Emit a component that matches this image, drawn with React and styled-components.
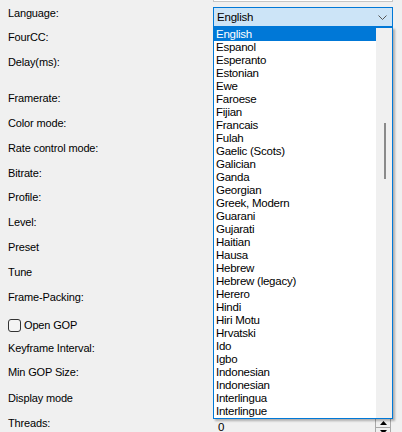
import React from "react";
import styled, { createGlobalStyle } from "styled-components";

const GlobalStyle = createGlobalStyle`
  html, body {
    margin: 0;
    padding: 0;
    background: #f0f0f0;
    overflow: hidden;
  }
  body {
    font-family: "Liberation Sans", Arial, sans-serif;
    font-size: 11px;
    color: #000;
  }
`;

const Page = styled.div`
  display: flex;
  flex-direction: column;
  margin-top: -25px;
  padding-left: 8px;
  width: 394px;
  height: 457px;
  overflow: hidden;
`;

const Row = styled.div`
  display: flex;
  align-items: flex-start;
  height: ${(p) => p.$h || 25}px;
  flex: none;
`;

const Label = styled.div`
  width: 205px;
  flex: none;
  padding-top: 1px;
  line-height: 25px;
  letter-spacing: -0.15px;
  white-space: nowrap;
`;

const TextBox = styled.div`
  margin-top: 6px;
  width: 180px;
  height: 21px;
  box-sizing: border-box;
  background: #fff;
  border: 1px solid #c6c6c6;
`;

const ComboWrap = styled.div`
  position: relative;
  margin-top: 7px;
  width: 180px;
`;

const Combo = styled.div`
  display: flex;
  align-items: center;
  justify-content: space-between;
  box-sizing: border-box;
  height: 20px;
  padding: 0 5px 0 3px;
  background: #cce4f7;
  border: 1px solid #0078d7;
  font-size: 11.5px;
  letter-spacing: -0.2px;
`;

const DropList = styled.div`
  position: absolute;
  top: 100%;
  left: 0;
  width: 180px;
  height: 392px;
  box-sizing: border-box;
  display: flex;
  background: #fff;
  border: 1px solid #0078d7;
  box-shadow: 2px 2px 2px rgba(0, 0, 0, 0.28);
  z-index: 5;
`;

const Items = styled.div`
  width: 162px;
  display: flex;
  flex-direction: column;
  overflow: hidden;
`;

const Item = styled.div`
  height: 13px;
  line-height: 13px;
  padding-left: 2px;
  font-size: 11.5px;
  letter-spacing: -0.25px;
  white-space: nowrap;
  background: ${(p) => (p.$selected ? "#0078d7" : "transparent")};
  color: ${(p) => (p.$selected ? "#fff" : "#000")};
`;

const ScrollBar = styled.div`
  width: 16px;
  background: #f0f0f0;
  display: flex;
  flex-direction: column;
  align-items: center;
  padding-top: 95px;
  box-sizing: border-box;
`;

const Thumb = styled.div`
  width: 2px;
  height: 56px;
  background: #8a8a8a;
  margin-left: 1px;
`;

const CheckRow = styled.label`
  display: flex;
  align-items: center;
  gap: 3px;
  line-height: 25px;
  padding-top: 1px;
  letter-spacing: -0.15px;
`;

const CheckBox = styled.span`
  width: 13px;
  height: 13px;
  box-sizing: border-box;
  border: 1px solid #333;
  border-radius: 3px;
  background: #f4f4f4;
`;

const SpinField = styled.div`
  margin-top: 8px;
  width: 180px;
  height: 20px;
  box-sizing: border-box;
  display: flex;
  align-items: flex-start;
  justify-content: space-between;
  padding-left: 5px;
  font-size: 11.5px;
`;

const SpinText = styled.span`
  line-height: 18px;
`;

const SpinButtons = styled.div`
  display: flex;
  flex-direction: column;
  width: 16px;
  margin-right: 2px;
`;

const SpinButton = styled.div`
  height: 8px;
  display: flex;
  align-items: center;
  justify-content: center;
  background: #f0f0f0;
  border: 1px solid #a8a8a8;
  border-top: ${(p) => (p.$first ? "1px solid #a8a8a8" : "none")};
`;

const languages = [
  "English",
  "Espanol",
  "Esperanto",
  "Estonian",
  "Ewe",
  "Faroese",
  "Fijian",
  "Francais",
  "Fulah",
  "Gaelic (Scots)",
  "Galician",
  "Ganda",
  "Georgian",
  "Greek, Modern",
  "Guarani",
  "Gujarati",
  "Haitian",
  "Hausa",
  "Hebrew",
  "Hebrew (legacy)",
  "Herero",
  "Hindi",
  "Hiri Motu",
  "Hrvatski",
  "Ido",
  "Igbo",
  "Indonesian",
  "Indonesian",
  "Interlingua",
  "Interlingue",
];

const Chevron = () => (
  <svg width="9" height="5" viewBox="0 0 9 5">
    <polyline points="0.5,0.5 4.5,4.5 8.5,0.5" fill="none" stroke="#555" strokeWidth="1" />
  </svg>
);

const Arrow = ({ up }) => (
  <svg width="7" height="4" viewBox="0 0 7 4">
    <polygon points={up ? "3.5,0 7,4 0,4" : "0,0 7,0 3.5,4"} fill="#000" />
  </svg>
);

const rows = [
  ["FourCC:", 25],
  ["Delay(ms):", 36],
  ["Framerate:", 25],
  ["Color mode:", 25],
  ["Rate control mode:", 25],
  ["Bitrate:", 24],
  ["Profile:", 25],
  ["Level:", 25],
  ["Preset", 25],
  ["Tune", 25],
  ["Frame-Packing:", 28],
];

const lowerRows = [
  ["Keyframe Interval:", 24],
  ["Min GOP Size:", 26],
  ["Display mode", 25],
];

export default function App() {
  return (
    <>
      <GlobalStyle />
      <Page>
        <Row $h={25}>
          <Label />
          <TextBox />
        </Row>
        <Row $h={24}>
          <Label>Language:</Label>
          <ComboWrap>
            <Combo>
              <span>English</span>
              <Chevron />
            </Combo>
            <DropList>
              <Items>
                {languages.map((name, i) => (
                  <Item key={i} $selected={i === 0}>
                    {name}
                  </Item>
                ))}
              </Items>
              <ScrollBar>
                <Thumb />
              </ScrollBar>
            </DropList>
          </ComboWrap>
        </Row>
        {rows.map(([text, h]) => (
          <Row key={text} $h={h}>
            <Label>{text}</Label>
          </Row>
        ))}
        <Row $h={23}>
          <CheckRow>
            <CheckBox />
            Open GOP
          </CheckRow>
        </Row>
        {lowerRows.map(([text, h]) => (
          <Row key={text} $h={h}>
            <Label>{text}</Label>
          </Row>
        ))}
        <Row $h={25}>
          <Label>Threads:</Label>
          <SpinField>
            <SpinText>0</SpinText>
            <SpinButtons>
              <SpinButton $first>
                <Arrow up />
              </SpinButton>
              <SpinButton>
                <Arrow />
              </SpinButton>
            </SpinButtons>
          </SpinField>
        </Row>
      </Page>
    </>
  );
}
